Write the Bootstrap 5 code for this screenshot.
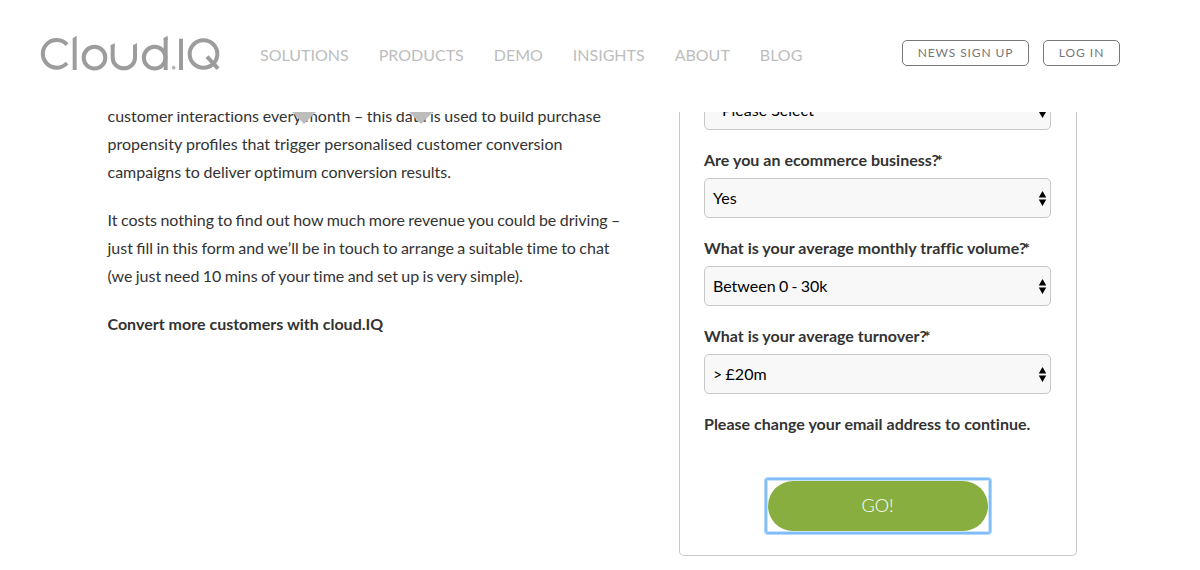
<!DOCTYPE html>
<html lang="en">
<head>
<meta charset="utf-8">
<meta name="viewport" content="width=device-width, initial-scale=1">
<title>Cloud.IQ</title>
<link rel="stylesheet" href="https://cdn.jsdelivr.net/npm/bootstrap@5.3.0/dist/css/bootstrap.min.css">
<style>
body{font-family:Lato,sans-serif;font-size:16px;line-height:28px;color:#333;background:#fff;height:570px;overflow:hidden;font-variant-ligatures:no-common-ligatures}
.lig{font-variant-ligatures:common-ligatures}
.site-header{height:112px;padding:0 80px 0 40px}
.logo{width:180px;height:36px;margin-top:35px}
.menu{gap:30px;margin:41px 0 0 40px}
.menu .nav-link{padding:0;color:#bdbdbd;line-height:28px;position:relative}
.menu .nav-link:hover{color:#777}
.caret::after{content:"";position:absolute;top:71px;left:50%;margin-left:-12px;border:12px solid transparent;border-top-color:#bdbdbd;border-bottom:0}
.account{gap:14px;margin-top:40px}
.account .btn{width:77px;height:26px;padding:0;border:1px solid #777;border-radius:5px;color:#777;font-size:12px;line-height:23px;letter-spacing:1px;white-space:nowrap}
.account .btn-news{width:127px;letter-spacing:.9px}
.viewport{height:458px}
.copy{width:520px;margin:-10px 0 0 107.5px;white-space:nowrap;word-spacing:-.7px}
.copy p{margin-bottom:20px}
.ws-1{word-spacing:-.5px}
.ws-2{word-spacing:.1px}
.ws-3{word-spacing:-.3px}
.form-card{width:398px;height:454px;margin:-10px 0 0 51.5px;padding:0 25px 0 24px;border:1px solid #c8c8c8;border-top:0;border-radius:0 0 5px 5px}
.field{height:88px}
.field label,.notice{display:block;height:28px;margin-bottom:4px;line-height:28px;font-weight:700;white-space:nowrap;word-spacing:.1px}
.req{margin-left:-3px;font-weight:700}
.select-box{height:40px;padding:0 3px 0 8px;border:1px solid #c8c8c8;border-radius:5px;background:#f8f8f8;color:#000;word-spacing:-.8px}
.placeholder-text{padding-left:9px;word-spacing:0}
.go{width:220px;height:50px;padding:0 0 2px;border:0;border-radius:25px;background:#89ae40!important;color:#fff!important;font-size:18px;font-weight:300;line-height:48px}
.focus-frame{border:2px solid #80bdfa;border-radius:3px;padding:1px;box-shadow:0 0 0 1px #b4d8fc,inset 0 0 0 1px #cbe4fd}
</style>
<script src="https://cdn.jsdelivr.net/npm/bootstrap@5.3.0/dist/js/bootstrap.bundle.min.js"></script>
</head>
<body>
<header class="site-header d-flex align-items-start position-relative z-3">
  <svg class="logo" viewBox="30 30 540 108" role="img" aria-label="Cloud.IQ">
    <g fill="none" stroke="#9c9c9c" stroke-width="12">
      <path d="M111 59A41.5 41.5 0 1 0 111 114"/>
      <circle cx="193.500" cy="98" r="32.500"/>
      <path d="M248 59V98A33.500 32 0 0 0 315 98V59"/>
      <circle cx="374" cy="98" r="32.500"/>
      <path d="M407 38V135M453 41V135M531 95L564 131"/>
      <circle cx="520.500" cy="87" r="41.500"/>
    </g>
    <g fill="#9c9c9c"><path d="M128 40L140 32V135H128ZM242 62L254 54V65H242ZM309 62L321 54V65H309ZM401 40L413 32V45H401Z"/><circle cx="431" cy="128" r="5.500" opacity=".75"/></g>
  </svg>
  <nav class="nav menu flex-nowrap">
    <a class="nav-link caret" href="#">SOLUTIONS</a>
    <a class="nav-link caret" href="#">PRODUCTS</a>
    <a class="nav-link" href="#">DEMO</a>
    <a class="nav-link" href="#">INSIGHTS</a>
    <a class="nav-link" href="#">ABOUT</a>
    <a class="nav-link" href="#">BLOG</a>
  </nav>
  <div class="account d-flex ms-auto">
    <a class="btn btn-news" href="#">NEWS SIGN UP</a>
    <a class="btn" href="#">LOG IN</a>
  </div>
</header>
<svg class="d-none"><symbol id="arrows" viewBox="0 0 8 14"><path d="M0.500 6L4 0L7.500 6ZM0.500 8H7.500L4 14Z"/></symbol></svg>
<main class="viewport d-flex align-items-start overflow-hidden">
  <section class="copy flex-shrink-0">
    <p><span class="ws-1">customer interactions every month – this data is used to build purchase</span><br><span class="ws-2">propensity <span class="lig">profiles</span> that trigger personalised customer conversion</span><br><span class="ws-3">campaigns to deliver optimum conversion results.</span></p>
    <p>It costs nothing to <span class="lig">find</span> out how much more revenue you could be driving –<br>just <span class="lig">fill</span> in this form and we’ll be in touch to arrange a suitable time to chat<br>(we just need 10 mins of your time and set up is very simple).</p>
    <p class="fw-bold ws-2">Convert more customers with cloud.IQ</p>
  </section>
  <form class="form-card flex-shrink-0">
    <div class="select-box d-flex align-items-center justify-content-between" style="margin:-12px 0 16px"><span class="placeholder-text">Please Select</span><svg width="9" height="15"><use href="#arrows"/></svg></div>
    <div class="field"><label>Are you an ecommerce business?<span class="req">*</span></label><div class="select-box d-flex align-items-center justify-content-between"><span>Yes</span><svg width="9" height="15"><use href="#arrows"/></svg></div></div>
    <div class="field"><label>What is your average monthly traffic volume?<span class="req">*</span></label><div class="select-box d-flex align-items-center justify-content-between"><span>Between 0 - 30k</span><svg width="9" height="15"><use href="#arrows"/></svg></div></div>
    <div class="field"><label>What is your average turnover?<span class="req">*</span></label><div class="select-box d-flex align-items-center justify-content-between"><span>&gt; £20m</span><svg width="9" height="15"><use href="#arrows"/></svg></div></div>
    <div class="notice">Please change your email address to continue.</div>
    <div class="d-flex justify-content-center mt-4 pt-3"><div class="focus-frame d-flex"><button class="btn go" type="button">GO!</button></div></div>
  </form>
</main>
</body>
</html>
